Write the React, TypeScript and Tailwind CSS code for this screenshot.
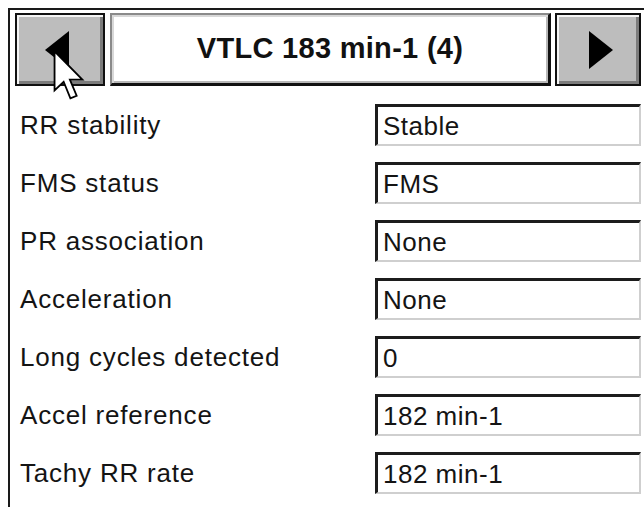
import React from "react";

const rows: { label: string; value: string }[] = [
  { label: "RR stability", value: "Stable" },
  { label: "FMS status", value: "FMS" },
  { label: "PR association", value: "None" },
  { label: "Acceleration", value: "None" },
  { label: "Long cycles detected", value: "0" },
  { label: "Accel reference", value: "182 min-1" },
  { label: "Tachy RR rate", value: "182 min-1" },
];

const Arrow: React.FC<{ dir: "left" | "right" }> = ({ dir }) => (
  <svg width="24" height="38" viewBox="0 0 24 38">
    {dir === "left" ? (
      <polygon points="24,0 24,38 0,19" fill="#000" />
    ) : (
      <polygon points="0,0 0,38 24,19" fill="#000" />
    )}
  </svg>
);

const NavButton: React.FC<{ dir: "left" | "right"; className?: string }> = ({
  dir,
  className,
}) => (
  <button
    className={`h-[73px] flex items-center justify-center bg-[#bdbdbd] border-2 border-[#111] shadow-[inset_2px_2px_0_#f4f4f4,inset_-3px_-3px_0_#7c7c7c] ${className ?? ""}`}
  >
    <Arrow dir={dir} />
  </button>
);

export default function App() {
  return (
    <div
      className="w-[644px] h-[507px] overflow-hidden bg-white pt-2 pl-2 relative"
      style={{ fontFamily: '"Liberation Sans", Arial, sans-serif' }}
    >
      <div className="w-[660px] h-[520px] border-t-2 border-l-2 border-[#1a1a1a]">
        {/* top navigation */}
        <div className="flex items-start pt-[3px] pl-[5px]">
          <NavButton dir="left" className="w-[90px] pr-[6px]" />
          <div className="ml-[5px] w-[441px] h-[73px] flex items-center justify-center bg-white border-t-2 border-l-2 border-[#8a8a8a] border-b-[3px] border-r-[3px] border-b-[#111] border-r-[#111] shadow-[inset_2px_2px_0_#d8d8d8,inset_-2px_-2px_0_#b8b8b8]">
            <span className="text-[29px] font-bold text-[#111] tracking-[0.3px]">
              VTLC 183 min-1 (4)
            </span>
          </div>
          <NavButton dir="right" className="ml-[4px] w-[86px] pl-[6px]" />
        </div>

        {/* status rows */}
        <div className="flex flex-col mt-[10px]">
          {rows.map((r) => (
            <div key={r.label} className="h-[58px] flex items-center">
              <span className="pl-[10px] w-[365px] text-[26px] text-[#141414] leading-none tracking-[0.8px]">
                {r.label}
              </span>
              <div className="w-[266px] h-[42px] flex items-center bg-white border-t-[3px] border-l-[3px] border-[#1c1c1c] border-b-2 border-r-2 border-b-[#cfcfcf] border-r-[#cfcfcf] pl-[5px]">
                <span className="text-[26px] text-[#141414] leading-none tracking-[0.5px]">
                  {r.value}
                </span>
              </div>
            </div>
          ))}
        </div>
      </div>

      {/* mouse pointer */}
      <svg
        className="absolute left-[53px] top-[50px]"
        width="33"
        height="52"
        viewBox="0 0 12.5 20"
      >
        <path
          d="M0.5 0.5 L0.5 15.5 L4 12.2 L6.6 18.6 L9 17.6 L6.4 11.4 L11.2 11.4 Z"
          fill="#fff"
          stroke="#000"
          strokeWidth="0.7"
          strokeLinejoin="miter"
        />
      </svg>
    </div>
  );
}
